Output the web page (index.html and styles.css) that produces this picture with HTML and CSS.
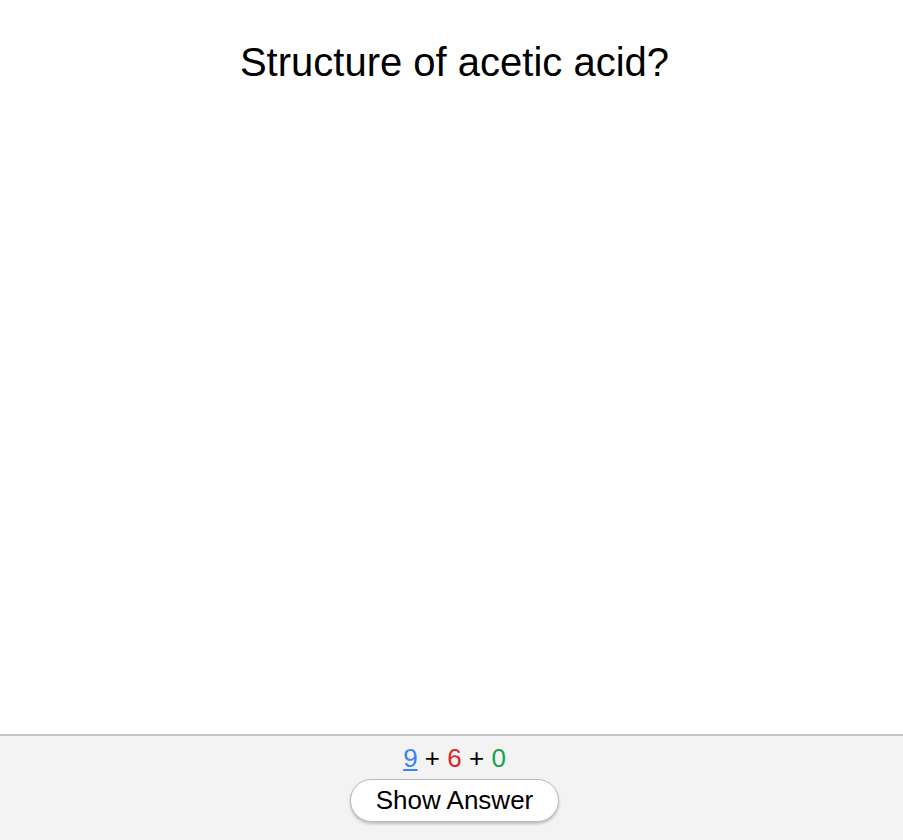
FILE: index.html
```html
<!DOCTYPE html>
<html>
<head>
<meta charset="utf-8">
<link rel="stylesheet" href="styles.css">
</head>
<body>
<div class="page">
  <main class="card">
    <div class="question">Structure of acetic acid?</div>
  </main>
  <footer class="bottombar">
    <div class="counts"><span class="new-count current">9</span> + <span class="learn-count">6</span> + <span class="review-count">0</span></div>
    <button class="answer-btn">Show Answer</button>
  </footer>
</div>
</body>
</html>
```
FILE: styles.css
```css
html, body {
  margin: 0;
  padding: 0;
  background: #ffffff;
  font-family: "Liberation Sans", Arial, sans-serif;
  color: #000;
}
.page {
  display: flex;
  flex-direction: column;
  height: 840px;
}
.card {
  height: 734px;
  box-sizing: border-box;
  padding-top: 40px;
  padding-left: 6px;
  text-align: center;
  background: #ffffff;
}
.question {
  font-size: 40px;
  line-height: normal;
}
.bottombar {
  flex: 1;
  background: #f3f3f3;
  border-top: 2px solid #c3c3c3;
  display: flex;
  flex-direction: column;
  align-items: center;
  padding-top: 7px;
  padding-left: 6px;
}
.counts {
  font-size: 26px;
  line-height: normal;
}
.new-count { color: #3b82f6; }
.learn-count { color: #dc2626; }
.review-count { color: #16a34a; }
.current { text-decoration: underline; }
.answer-btn {
  margin-top: 5px;
  font-family: "Liberation Sans", Arial, sans-serif;
  font-size: 26px;
  line-height: normal;
  color: #000;
  background: #ffffff;
  border: 1px solid #b9b9b9;
  border-radius: 22px;
  padding: 5px 25px;
  box-shadow: 0 2px 3px rgba(0, 0, 0, 0.22);
}
```
